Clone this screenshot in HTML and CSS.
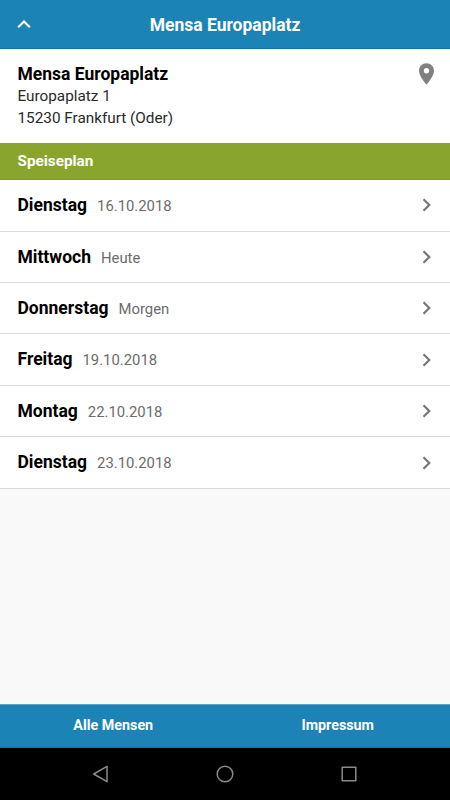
FILE: index.html
```html
<!DOCTYPE html>
<html lang="de">
<head>
<meta charset="utf-8">
<title>Mensa Europaplatz</title>
<link rel="stylesheet" href="styles.css">
</head>
<body>
<header class="topbar">
  <svg class="up" viewBox="0 0 14 14"><path d="M1.200 10.300 7 4.500l5.800 5.800"/></svg>
  <h1>Mensa Europaplatz</h1>
</header>
<main>
  <section class="address">
    <div>
      <h2>Mensa Europaplatz</h2>
      <p>Europaplatz 1</p>
      <p>15230 Frankfurt (Oder)</p>
    </div>
    <svg class="pin" viewBox="5 2 14 20"><path d="M12 2C8.13 2 5 5.13 5 9c0 5.25 7 13 7 13s7-7.75 7-13c0-3.87-3.13-7-7-7zm0 9.5a2.5 2.5 0 0 1 0-5 2.5 2.5 0 0 1 0 5z"/></svg>
  </section>
  <h3 class="section">Speiseplan</h3>
  <ul class="days">
    <li><b>Dienstag</b><span>16.10.2018</span><svg viewBox="0 0 10 14"><path d="M1.500 1.200 7.300 7l-5.800 5.800"/></svg></li>
    <li><b>Mittwoch</b><span>Heute</span><svg viewBox="0 0 10 14"><path d="M1.500 1.200 7.300 7l-5.800 5.800"/></svg></li>
    <li><b>Donnerstag</b><span>Morgen</span><svg viewBox="0 0 10 14"><path d="M1.500 1.200 7.300 7l-5.800 5.800"/></svg></li>
    <li><b>Freitag</b><span>19.10.2018</span><svg viewBox="0 0 10 14"><path d="M1.500 1.200 7.300 7l-5.800 5.800"/></svg></li>
    <li><b>Montag</b><span>22.10.2018</span><svg viewBox="0 0 10 14"><path d="M1.500 1.200 7.300 7l-5.800 5.800"/></svg></li>
    <li><b>Dienstag</b><span>23.10.2018</span><svg viewBox="0 0 10 14"><path d="M1.500 1.200 7.300 7l-5.800 5.800"/></svg></li>
  </ul>
</main>
<footer class="tabs"><span>Alle Mensen</span><span>Impressum</span></footer>
<nav class="system">
  <svg viewBox="0 0 20 20"><path d="M16 2.300v15.400L2.700 10z"/></svg>
  <svg viewBox="0 0 20 20"><circle cx="10" cy="10" r="7.800"/></svg>
  <svg viewBox="0 0 20 20"><rect x="3.200" y="3.200" width="13.600" height="13.600"/></svg>
</nav>
</body>
</html>
```
FILE: styles.css
```css
* { box-sizing: border-box; margin: 0; padding: 0; }
body {
  width: 450px;
  height: 800px;
  display: flex;
  flex-direction: column;
  overflow: hidden;
  background: #f9f9f9;
  color: #000;
  font-family: Roboto, sans-serif;
}
.topbar {
  height: 49px;
  display: grid;
  grid-template-columns: 49px 1fr 49px;
  align-items: center;
  background: #1b83b5;
  border-bottom: 1px solid #0874a9;
  color: #fff;
}
.up { width: 14px; height: 14px; margin-left: 17px; fill: none; stroke: #fff; stroke-width: 2.2; }
h1 { padding-top: 1px; font-size: 17.5px; line-height: 22px; font-weight: 700; text-align: center; }
main { flex: 1; }
.address {
  height: 94px;
  padding: 14px 16px 0 17.5px;
  display: flex;
  justify-content: space-between;
  background: #fff;
}
h2 { font-size: 17.5px; line-height: 22px; font-weight: 700; }
.address p { font-size: 15.3px; line-height: 22px; color: #2a2a2a; }
.pin { width: 15px; height: 22px; fill: #808080; }
.section {
  height: 37px;
  padding-left: 17.5px;
  background: #8aa52e;
  border-bottom: 1px solid #82a010;
  color: #fff;
  font-size: 15.3px;
  line-height: 36px;
}
.days { list-style: none; }
.days li {
  height: 51.45px;
  padding: 0 18px 0 17.5px;
  display: flex;
  align-items: baseline;
  gap: 10px;
  border-bottom: 1px solid #dadada;
  background: #fff;
  line-height: 50.5px;
}
.days li:first-child { height: 51.6px; }
.days b { font-size: 17.5px; }
.days span { font-size: 14.85px; color: #6c6c6c; }
.days svg { width: 10px; height: 14px; margin-left: auto; align-self: center; fill: none; stroke: #777; stroke-width: 2.2; }
.tabs {
  height: 44px;
  padding-left: 1px;
  display: grid;
  grid-template-columns: 1fr 1fr;
  background: #1b83b5;
  border-top: 1px solid #5da3c5;
  border-bottom: 1px solid #0874a9;
  color: #fff;
  font-size: 14.3px;
  font-weight: 700;
  line-height: 41px;
  text-align: center;
}
.system {
  height: 52px;
  padding: 0 91px;
  display: flex;
  align-items: center;
  justify-content: space-between;
  background: #000;
}
.system svg { width: 20px; height: 20px; fill: none; stroke: #8a8a8a; stroke-width: 1.500; stroke-linejoin: round; }
```
